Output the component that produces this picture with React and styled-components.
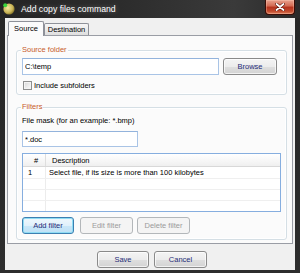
import React from 'react';
import styled, { createGlobalStyle } from 'styled-components';

const GlobalStyle = createGlobalStyle`
  html, body { margin: 0; padding: 0; background: #2b2b2b; }
  body { font-family: "Liberation Sans", Arial, sans-serif; }
  * { box-sizing: border-box; }
`;

const Window = styled.div`
  width: 300px;
  height: 273px;
  display: flex;
  flex-direction: column;
  background: linear-gradient(180deg, #2f2f2f 0%, #262626 8%, #2d2d2d 100%);
`;

const TitleBar = styled.div`
  height: 18px;
  flex: none;
  display: flex;
  align-items: center;
  padding-left: 3px;
  background: linear-gradient(90deg, #242424 0%, #2c2c2c 40%, #3a3a3a 78%, #2a2a2a 100%);
`;

const Title = styled.span`
  margin-left: 6px;
  font-size: 8.7px;
  line-height: 12px;
  color: #ffffff;
  text-shadow: 0 0 5px rgba(255, 255, 255, 0.35);
  white-space: nowrap;
`;

const CloseButton = styled.div`
  margin-left: auto;
  margin-right: 5px;
  align-self: flex-start;
  width: 30px;
  height: 15px;
  border: 1px solid #3a0c05;
  border-top: none;
  border-radius: 0 0 4px 4px;
  background: linear-gradient(180deg, #e9a28e 0%, #d36b53 42%, #b5331d 52%, #c24a2d 80%, #de7f5c 100%);
  box-shadow: inset 0 0 0 1px rgba(255, 210, 190, 0.35);
  display: flex;
  align-items: center;
  justify-content: center;
`;

const Body = styled.div`
  flex: 1;
  margin: 0 5px 3px;
  background: #f0f0f0;
  padding: 3px 2px 0;
  display: flex;
  flex-direction: column;
`;

const TabStrip = styled.div`
  height: 14px;
  flex: none;
  display: flex;
  align-items: flex-end;
  padding-left: 1px;
`;

const Tab = styled.div`
  position: relative;
  width: ${(p) => p.$w}px;
  height: ${(p) => (p.$active ? 15 : 12)}px;
  margin-bottom: ${(p) => (p.$active ? -1 : 0)}px;
  z-index: ${(p) => (p.$active ? 1 : 0)};
  border: 1px solid #8e9199;
  border-bottom: none;
  border-radius: 2px 2px 0 0;
  background: ${(p) => (p.$active ? '#fbfbfb' : 'linear-gradient(180deg, #f6f6f6 0%, #ebebeb 50%, #dedede 100%)')};
  display: flex;
  align-items: center;
  justify-content: center;
  padding-top: ${(p) => (p.$active ? 0 : 1)}px;
  font-size: 7.5px;
  line-height: 10px;
  color: #000;
`;

const Panel = styled.div`
  height: 209px;
  flex: none;
  border: 1px solid #9a9da5;
  background: #fbfbfb;
  padding: 14px 0 0 8px;
  display: flex;
  flex-direction: column;
`;

const GroupBox = styled.div`
  width: 271px;
  height: ${(p) => p.$h}px;
  margin-top: ${(p) => p.$mt || 0}px;
  border: 1px solid #d5dfe5;
  border-radius: 3px;
  box-shadow: inset 0 0 0 1px #ffffff;
  padding: 0 5px;
  display: flex;
  flex-direction: column;
`;

const Caption = styled.span`
  align-self: flex-start;
  margin: -6px 0 0 -1px;
  padding: 0 1px;
  background: #fbfbfb;
  color: #c75b2c;
  font-size: 7.5px;
  line-height: 10px;
`;

const FieldRow = styled.div`
  display: flex;
  gap: 4px;
  margin-top: 3px;
  margin-right: 4px;
`;

const TextField = styled.input`
  height: 17px;
  ${(p) => (p.$w ? `width: ${p.$w}px;` : 'flex: 1;')}
  margin-top: ${(p) => p.$mt || 0}px;
  min-width: 0;
  border: 1px solid #a9c4e6;
  border-top-color: #93b3dc;
  background: #ffffff;
  padding: 0 2px;
  font-family: "Liberation Sans", Arial, sans-serif;
  font-size: 7.5px;
  color: #000;
  outline: none;
`;

const Button = styled.button`
  width: ${(p) => p.$w}px;
  height: 17px;
  flex: none;
  margin-right: ${(p) => p.$mr || 0}px;
  padding: 0;
  border: 1px solid ${(p) => (p.$default ? '#3c7fb1' : '#8a8a8a')};
  border-radius: 3px;
  background: ${(p) =>
    p.$default
      ? 'linear-gradient(180deg, #f0f8fd 0%, #e0f1fb 50%, #cae7f8 51%, #bfe1f6 100%)'
      : 'linear-gradient(180deg, #f4f4f4 0%, #ececec 50%, #dfdfdf 51%, #d3d3d3 100%)'};
  box-shadow: inset 0 0 0 1px ${(p) => (p.$default ? '#8fdcf4' : 'rgba(255,255,255,0.7)')};
  font-family: "Liberation Sans", Arial, sans-serif;
  font-size: 7.5px;
  color: #1f2c78;
  cursor: default;

  &:disabled {
    border-color: #b3b7ba;
    background: #f4f4f4;
    box-shadow: none;
    color: #9b9b9b;
  }
`;

const CheckRow = styled.label`
  display: flex;
  align-items: center;
  gap: 2px;
  height: 11px;
  margin-top: 5px;
  padding-left: 1px;
  font-size: 7.5px;
  line-height: 10px;
  color: #000;
`;

const CheckBox = styled.span`
  width: 9px;
  height: 9px;
  border: 1px solid #8e8f8f;
  background: linear-gradient(135deg, #d6d6d6 0%, #eeeeee 60%, #fafafa 100%);
  box-shadow: inset 0 0 0 1px #f4f4f4;
`;

const FieldLabel = styled.div`
  margin-top: 4px;
  font-size: 7.5px;
  line-height: 10px;
  color: #000;
`;

const ListBox = styled.div`
  height: 59px;
  margin-top: 6px;
  border: 1px solid #86aedf;
  background: #ffffff;
  display: flex;
  flex-direction: column;
  overflow: hidden;
`;

const HeadRow = styled.div`
  display: grid;
  grid-template-columns: 23px 1fr;
  height: 13px;
  flex: none;
  border-bottom: 1px solid #d8d8d8;
  background: linear-gradient(180deg, #ffffff 0%, #f6f6f6 60%, #efefef 100%);
`;

const HeadCell = styled.div`
  padding-left: ${(p) => p.$pl}px;
  padding-top: 1px;
  border-right: ${(p) => (p.$first ? '1px solid #dedede' : 'none')};
  font-size: 7.5px;
  line-height: 11px;
  color: #000;
`;

const Row = styled.div`
  display: grid;
  grid-template-columns: 23px 1fr;
  height: ${(p) => p.$h}px;
  flex: none;
  border-bottom: 1px solid #efefef;
`;

const Cell = styled.div`
  padding-left: ${(p) => p.$pl}px;
  border-right: ${(p) => (p.$first ? '1px solid #ececec' : 'none')};
  font-size: 7.5px;
  line-height: 11px;
  color: #000;
  white-space: nowrap;
`;

const ButtonRow = styled.div`
  display: flex;
  margin-top: 5px;
`;

const Footer = styled.div`
  flex: 1;
  display: flex;
  justify-content: center;
  align-items: flex-start;
  gap: 5px;
  padding: 7px 0 0 4px;
`;

const AppIcon = () => (
  <svg width="12" height="12" viewBox="0 0 12 12">
    <defs>
      <radialGradient id="ig" cx="40%" cy="40%" r="60%">
        <stop offset="0%" stopColor="#f3e9a0" />
        <stop offset="70%" stopColor="#c9b457" />
        <stop offset="100%" stopColor="#8f7d2e" />
      </radialGradient>
    </defs>
    <circle cx="6" cy="6" r="5.6" fill="url(#ig)" />
    <circle cx="2.2" cy="2.2" r="2" fill="#39d43c" />
  </svg>
);

const CloseGlyph = () => (
  <svg width="10" height="8" viewBox="0 0 10 8">
    <path d="M1.5 1 L8.5 7 M8.5 1 L1.5 7" stroke="#5a1408" strokeWidth="3" strokeLinecap="round" />
    <path d="M1.5 1 L8.5 7 M8.5 1 L1.5 7" stroke="#ffffff" strokeWidth="1.8" strokeLinecap="round" />
  </svg>
);

export default function App() {
  return (
    <>
      <GlobalStyle />
      <Window>
        <TitleBar>
          <AppIcon />
          <Title>Add copy files command</Title>
          <CloseButton>
            <CloseGlyph />
          </CloseButton>
        </TitleBar>
        <Body>
          <TabStrip>
            <Tab $active $w={36}>Source</Tab>
            <Tab $w={45}>Destination</Tab>
          </TabStrip>
          <Panel>
            <GroupBox $h={45}>
              <Caption>Source folder</Caption>
              <FieldRow>
                <TextField readOnly value="C:\temp" />
                <Button $w={54}>Browse</Button>
              </FieldRow>
              <CheckRow>
                <CheckBox />
                Include subfolders
              </CheckRow>
            </GroupBox>
            <GroupBox $h={133} $mt={12}>
              <Caption>Filters</Caption>
              <FieldLabel>File mask (for an example: *.bmp)</FieldLabel>
              <TextField readOnly value="*.doc" $w={116} $mt={5} style={{ height: 16 }} />
              <ListBox>
                <HeadRow>
                  <HeadCell $first $pl={11}>#</HeadCell>
                  <HeadCell $pl={6}>Description</HeadCell>
                </HeadRow>
                <Row $h={12}>
                  <Cell $first $pl={5}>1</Cell>
                  <Cell $pl={3}>Select file, if its size is more than 100 kilobytes</Cell>
                </Row>
                <Row $h={11}>
                  <Cell $first />
                  <Cell />
                </Row>
                <Row $h={11}>
                  <Cell $first />
                  <Cell />
                </Row>
                <Row $h={11}>
                  <Cell $first />
                  <Cell />
                </Row>
              </ListBox>
              <ButtonRow>
                <Button $default $w={52} $mr={6}>Add filter</Button>
                <Button disabled $w={53} $mr={4}>Edit filter</Button>
                <Button disabled $w={53}>Delete filter</Button>
              </ButtonRow>
            </GroupBox>
          </Panel>
          <Footer>
            <Button $w={52}>Save</Button>
            <Button $w={53}>Cancel</Button>
          </Footer>
        </Body>
      </Window>
    </>
  );
}
